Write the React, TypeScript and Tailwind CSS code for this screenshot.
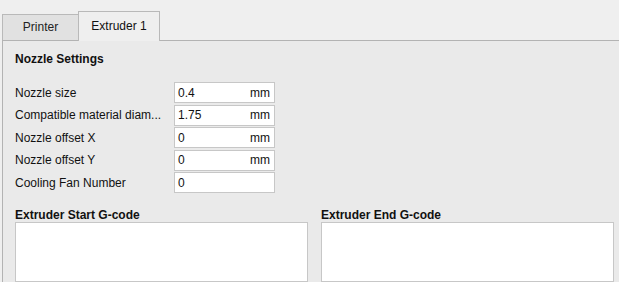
import React from "react";

const rows: { label: string; value: string; unit?: string }[] = [
  { label: "Nozzle size", value: "0.4", unit: "mm" },
  { label: "Compatible material diam...", value: "1.75", unit: "mm" },
  { label: "Nozzle offset X", value: "0", unit: "mm" },
  { label: "Nozzle offset Y", value: "0", unit: "mm" },
  { label: "Cooling Fan Number", value: "0" },
];

export default function App() {
  return (
    <div className="w-[619px] h-[282px] overflow-hidden bg-[#efefef] text-[12px] text-[#111] font-['Liberation_Sans',Arial,sans-serif] flex flex-col">
      <div className="h-[40px] flex items-end pl-[2px] shrink-0">
        <div className="h-[26px] w-[76px] border-l border-t border-[#b9b9b9] bg-[#e1e1e1] flex items-center justify-center pb-[1px] text-[#222]">
          Printer
        </div>
        <div className="relative z-10 -mb-px h-[30px] w-[82px] border-l border-t border-r border-[#b9b9b9] bg-[#efefef] flex items-center justify-center pb-[1px]">
          Extruder 1
        </div>
      </div>
      <div className="flex-1 ml-[2px] border-t border-l border-[#b3b3b3] bg-[#eaeaea] pl-[12px] flex flex-col">
        <div className="mt-[10px] h-[16px] flex items-center font-bold">Nozzle Settings</div>
        <div className="mt-[15px] flex flex-col gap-[1.5px]">
          {rows.map((r) => (
            <div key={r.label} className="flex items-center h-[21px]">
              <div className="w-[159px] shrink-0">{r.label}</div>
              <div className="w-[101px] h-[21px] border border-[#c7c7c7] bg-white flex items-center pl-[3px] pr-[4px]">
                <span className="flex-1">{r.value}</span>
                {r.unit && <span>{r.unit}</span>}
              </div>
            </div>
          ))}
        </div>
        <div className="mt-[16px] flex gap-[13px] flex-1">
          <div className="w-[293px] flex flex-col">
            <div className="h-[13px] flex items-end font-bold leading-[13px]">Extruder Start G-code</div>
            <div className="flex-1 border border-[#c7c7c7] bg-white"></div>
          </div>
          <div className="w-[293px] flex flex-col">
            <div className="h-[13px] flex items-end font-bold leading-[13px]">Extruder End G-code</div>
            <div className="flex-1 border border-[#c7c7c7] bg-white"></div>
          </div>
        </div>
      </div>
    </div>
  );
}
